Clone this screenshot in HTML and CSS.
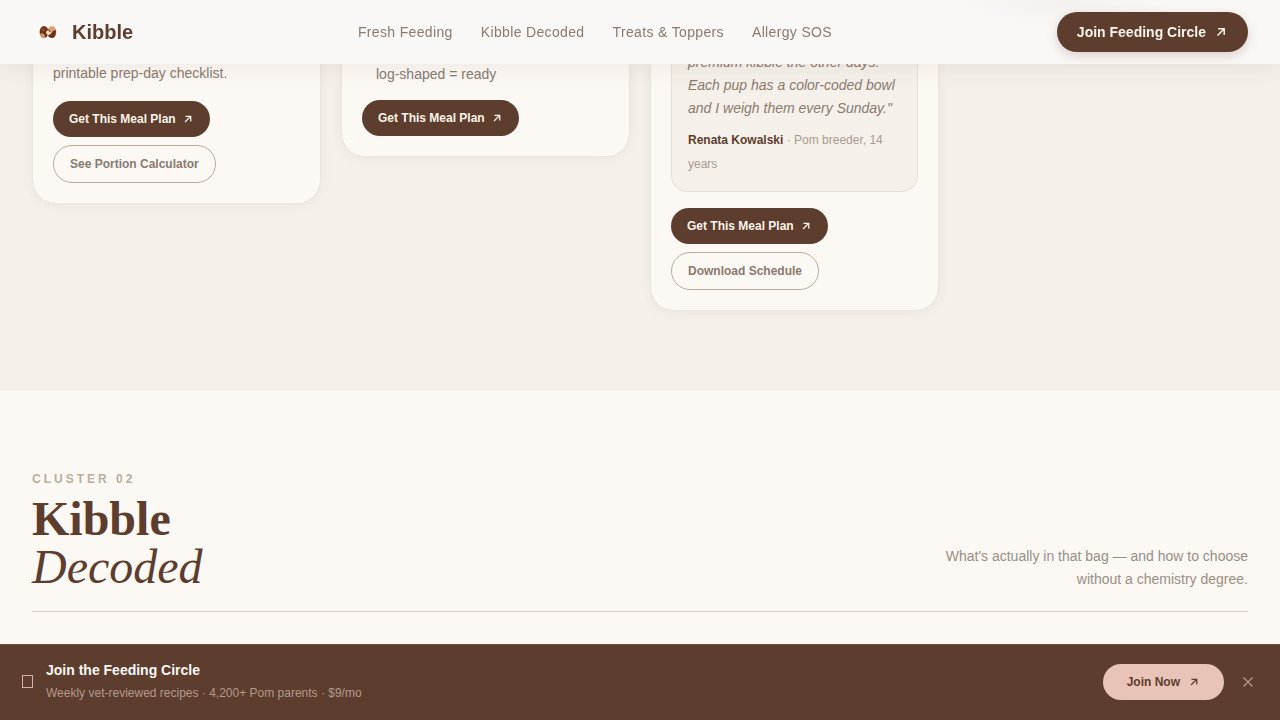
FILE: index.html
```html
<!DOCTYPE html>
<html lang="en">
<head>
    <meta charset="UTF-8">
    <meta name="viewport" content="width=device-width, initial-scale=1.0">
    <title>Kibble</title>
    <link rel="stylesheet" href="styles.css">
</head>
<body>

<!-- shared icons -->
<svg class="sprite" aria-hidden="true">
    <symbol id="arrow" viewBox="0 0 24 24">
        <path d="M6 18 18 6M7 6.5h10.5V17" fill="none" stroke="currentColor" stroke-width="2.5"/>
    </symbol>
</svg>

<header class="header">
    <a href="#" class="logo">
        <svg class="logo-icon" viewBox="0 0 32 32" aria-hidden="true">
            <ellipse cx="12" cy="16" rx="4.4" ry="6" fill="#6e3216"/>
            <path d="M8 18c1-1 3-1 4 0s1 3 1 4c-3 0-5-1-5-4z" fill="#cf9567"/>
            <path d="M9 14c1-2 3-2 4-1l-1 3z" fill="#8f4f2b"/>
            <ellipse cx="20" cy="16" rx="4.4" ry="6" fill="#d9a074"/>
            <path d="M24 14c0 5-1 8-4 8-2 0-4-1-4-3 2 0 4-2 5-4z" fill="#6e3216"/>
            <path d="M14 16c1-2 3-2 4-1l1 2-2 2c-2 0-3-1-3-3z" fill="#f0d9c4"/>
            <path d="M15 13l2 1 1 2" fill="none" stroke="#6e3216" stroke-width="1"/>
        </svg>
        <span>Kibble</span>
    </a>
    <nav class="nav">
        <a href="#fresh">Fresh Feeding</a>
        <a href="#decoded">Kibble Decoded</a>
        <a href="#">Treats &amp; Toppers</a>
        <a href="#">Allergy SOS</a>
    </nav>
    <button class="btn btn-header">Join Feeding Circle <svg class="icon-lg"><use href="#arrow"/></svg></button>
</header>

<section class="meals" id="fresh">
    <article class="card">
        <div class="card-text"><p>printable prep-day checklist.</p></div>
        <div class="card-actions">
            <button class="btn btn-dark">Get This Meal Plan <svg class="icon"><use href="#arrow"/></svg></button>
            <button class="btn btn-outline">See Portion Calculator</button>
        </div>
    </article>

    <article class="card">
        <ul class="card-list">
            <li>log-shaped = ready</li>
        </ul>
        <div class="card-actions">
            <button class="btn btn-dark">Get This Meal Plan <svg class="icon"><use href="#arrow"/></svg></button>
        </div>
    </article>

    <article class="card">
        <div class="quote">
            <p class="quote-text">premium kibble the other days. Each pup has a color-coded bowl and I weigh them every Sunday."</p>
            <p class="quote-author"><strong>Renata Kowalski</strong> · Pom breeder, 14 years</p>
        </div>
        <div class="card-actions">
            <button class="btn btn-dark">Get This Meal Plan <svg class="icon"><use href="#arrow"/></svg></button>
            <button class="btn btn-outline">Download Schedule</button>
        </div>
    </article>
</section>

<section class="cluster" id="decoded">
    <div class="cluster-head">
        <div>
            <div class="cluster-label">CLUSTER 02</div>
            <h2>Kibble<br><em>Decoded</em></h2>
        </div>
        <p class="cluster-desc">What's actually in that bag — and how to choose without a chemistry degree.</p>
    </div>
</section>

<aside class="join-bar">
    <svg class="join-icon" viewBox="0 0 14 20" aria-hidden="true">
        <rect x="2.5" y="3.5" width="10" height="12" fill="none" stroke="#d9b3a5"/>
    </svg>
    <div class="join-text">
        <strong>Join the Feeding Circle</strong>
        <span>Weekly vet-reviewed recipes · 4,200+ Pom parents · $9/mo</span>
    </div>
    <button class="btn btn-pink">Join Now <svg class="icon"><use href="#arrow"/></svg></button>
    <button class="close" aria-label="Close">
        <svg viewBox="0 0 16 16"><path d="M3.5 3.5l9 9M12.5 3.5l-9 9" fill="none" stroke="currentColor" stroke-width="1.3"/></svg>
    </button>
</aside>

</body>
</html>
```

FILE: styles.css
```css
* {
    box-sizing: border-box;
    margin: 0;
    padding: 0;
}
body {
    font-family: "Liberation Sans", Arial, sans-serif;
    font-size: 14px;
    line-height: 23px;
    color: #8a7a70;
    background: #fcf8f4;
}
a {
    color: inherit;
    text-decoration: none;
}
.sprite {
    position: absolute;
    width: 0;
    height: 0;
}

/* header */
.header {
    position: fixed;
    top: 0;
    left: 0;
    right: 0;
    z-index: 10;
    height: 64px;
    padding: 0 32px;
    display: flex;
    align-items: center;
    justify-content: space-between;
    background: radial-gradient(ellipse 110px 28px at 83% 0, #f4f0ee, #faf8f6);
    box-shadow: 0 4px 24px rgba(92, 61, 46, 0.08);
}
.logo {
    display: flex;
    align-items: center;
    gap: 8px;
    font-size: 20px;
    font-weight: bold;
    color: #5c3d2e;
}
.logo-icon {
    width: 32px;
    height: 32px;
}
.nav {
    display: flex;
    gap: 28px;
    letter-spacing: 0.025em;
}

/* buttons */
.btn {
    display: inline-flex;
    align-items: center;
    gap: 6px;
    height: 36px;
    padding: 0 16px;
    border: none;
    border-radius: 20px;
    font-family: inherit;
    font-size: 12px;
    font-weight: bold;
    cursor: pointer;
}
.btn-header {
    height: 40px;
    padding: 0 20px;
    gap: 8px;
    font-size: 14px;
    color: #fcf3ea;
    background: #5c3d2e;
    box-shadow: 0 4px 12px rgba(92, 61, 46, 0.2);
}
.btn-dark {
    color: #fcf3ea;
    background: #5c3d2e;
}
.btn-outline {
    height: 38px;
    color: #8a7a70;
    background: transparent;
    border: 1px solid #b8ada0;
}
.btn-pink {
    padding: 0 24px;
    gap: 8px;
    color: #5c3d2e;
    background: #e8c4b8;
}
.icon {
    width: 12px;
    height: 12px;
}
.icon-lg {
    width: 14px;
    height: 14px;
}

/* meal cards */
.meals {
    display: grid;
    grid-template-columns: repeat(4, 1fr);
    gap: 20px;
    align-items: start;
    padding: 0 32px 80px;
    background: #f5f0ea;
}
.card {
    padding: 20px;
    border: 1px solid #ede6de;
    border-radius: 24px;
    background: #fcf8f4;
    box-shadow: 0 2px 12px rgba(92, 61, 46, 0.06);
}
.card-text,
.card-list,
.quote {
    display: flex;
    flex-direction: column;
    justify-content: flex-end;
}
.card-text {
    min-height: 64px;
    margin-bottom: 16px;
}
.card-list {
    min-height: 65px;
    margin-bottom: 14px;
    padding-left: 14px;
    line-height: 24px;
    list-style: none;
}
.card-actions {
    display: flex;
    flex-direction: column;
    align-items: flex-start;
    gap: 8px;
}
.quote {
    min-height: 171px;
    margin-bottom: 16px;
    padding: 15px 16px;
    border: 1px solid #e8e0d6;
    border-radius: 16px;
    background: #f5f0ea;
}
.quote-text {
    margin-bottom: 8px;
    font-style: italic;
}
.quote-author {
    font-size: 12px;
    line-height: 24px;
    color: #a89b90;
}
.quote-author strong {
    color: #5c3d2e;
}

/* cluster heading */
.cluster {
    padding: 80px 32px 120px;
}
.cluster-head {
    display: flex;
    justify-content: space-between;
    align-items: flex-end;
    padding-bottom: 20px;
    border-bottom: 1px solid #d8d0c8;
}
.cluster-label {
    margin-bottom: 8px;
    font-size: 12px;
    font-weight: bold;
    line-height: 16px;
    letter-spacing: 3px;
    color: #b8b0a0;
}
.cluster h2 {
    font-family: "Liberation Serif", "Times New Roman", serif;
    font-size: 48px;
    line-height: 48px;
    color: #5c3d2e;
}
.cluster h2 em {
    font-weight: normal;
}
.cluster-desc {
    max-width: 320px;
    text-align: right;
    color: #9a8f84;
}

/* bottom bar */
.join-bar {
    position: fixed;
    left: 0;
    right: 0;
    bottom: 0;
    z-index: 10;
    display: flex;
    align-items: center;
    padding: 15px 20px;
    background: #5c3d2e;
    box-shadow: inset 0 1px #6b4d3f;
}
.join-icon {
    width: 14px;
    height: 20px;
    margin-right: 12px;
}
.join-text {
    flex: 1;
    display: flex;
    flex-direction: column;
}
.join-text strong {
    line-height: 22px;
    color: #fcf8f4;
}
.join-text span {
    font-size: 12px;
    line-height: 24px;
    color: #b39a8c;
}
.close {
    display: flex;
    margin-left: 12px;
    padding: 4px;
    border: none;
    color: #b39a8c;
    background: none;
    cursor: pointer;
}
.close svg {
    width: 16px;
    height: 16px;
}
```
